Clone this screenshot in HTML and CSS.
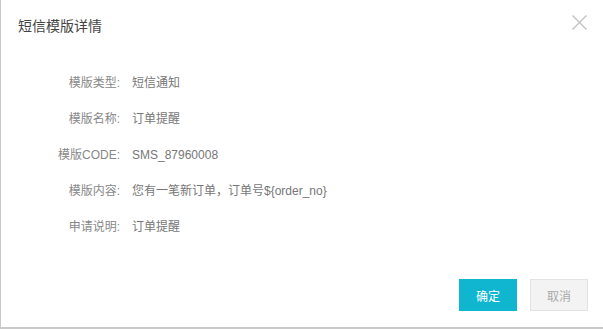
FILE: index.html
```html
<!DOCTYPE html>
<html lang="zh-CN">
<head>
<meta charset="utf-8">
<title>短信模版详情</title>
<link rel="stylesheet" href="styles.css">
</head>
<body>
<div class="dialog">
  <div class="header">
    <span class="title">短信模版详情</span>
    <button class="close" aria-label="关闭">
      <svg width="15" height="15" viewBox="0 0 15 15"><path d="M0.5 0.5 L14.5 14.5 M14.5 0.5 L0.5 14.5" stroke="#c6c6c6" stroke-width="1.5" fill="none"/></svg>
    </button>
  </div>
  <div class="body">
    <div class="label">模版类型:</div><div class="value">短信通知</div>
    <div class="label">模版名称:</div><div class="value">订单提醒</div>
    <div class="label">模版CODE:</div><div class="value">SMS_87960008</div>
    <div class="label">模版内容:</div><div class="value">您有一笔新订单，订单号${order_no}</div>
    <div class="label">申请说明:</div><div class="value">订单提醒</div>
  </div>
  <div class="footer">
    <button class="btn primary">确定</button>
    <button class="btn ghost">取消</button>
  </div>
</div>
</body>
</html>
```

FILE: styles.css
```css
html, body {
  margin: 0;
  padding: 0;
  background: #c9c9c9;
  width: 603px;
  height: 329px;
  overflow: hidden;
}
.dialog {
  margin-left: 1px;
  width: 602px;
  height: 327px;
  background: #fff;
  position: relative;
  display: flex;
  flex-direction: column;
  font-family: "Liberation Sans", "Noto Sans CJK SC", sans-serif;
}
.header {
  height: 50px;
  padding-left: 17px;
  display: flex;
  align-items: center;
}
.title {
  font-size: 14px;
  color: #444;
}
.close {
  position: absolute;
  top: 15px;
  right: 16px;
  width: 15px;
  height: 15px;
  padding: 0;
  border: 0;
  background: none;
  display: block;
}
.close svg { display: block; }
.body {
  padding-top: 15px;
  display: grid;
  grid-template-columns: 119px 1fr;
  column-gap: 12px;
  grid-auto-rows: 36px;
  font-size: 12px;
}
.label {
  text-align: right;
  color: #888;
  line-height: 36px;
}
.value {
  color: #777;
  line-height: 36px;
}
.footer {
  margin-top: auto;
  margin-bottom: 16px;
  padding-right: 15px;
  display: flex;
  justify-content: flex-end;
  gap: 13px;
}
.btn {
  height: 32px;
  font-size: 12px;
  font-family: "Liberation Sans", "Noto Sans CJK SC", sans-serif;
  padding: 0;
  border-radius: 0;
}
.primary {
  width: 58px;
  background: #10b5cf;
  color: #fff;
  border: 1px solid #10b5cf;
}
.ghost {
  width: 58px;
  background: #f3f3f3;
  color: #aaa;
  border: 1px solid #e3e3e3;
}
```
